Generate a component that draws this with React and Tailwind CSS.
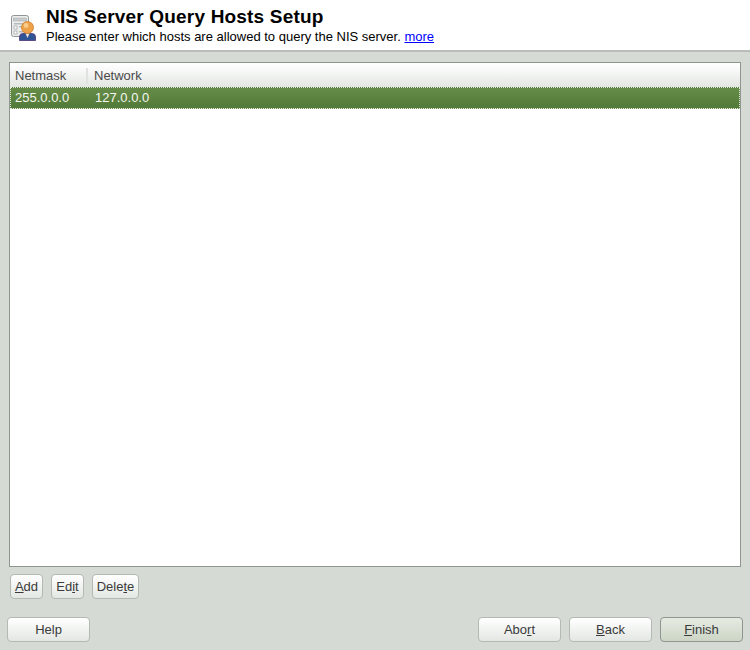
const NisIcon = () => (
  <svg width="26" height="28" viewBox="0 0 26 28" className="block">
    <rect x="1.5" y="1.5" width="17" height="21" rx="2" fill="#eceeec" stroke="#8f9499" />
    <rect x="3.5" y="4" width="13" height="3" fill="#c9ccce" stroke="#a2a6aa" strokeWidth="0.5" />
    <rect x="4" y="9" width="12" height="1.5" fill="#b5b9bc" />
    <rect x="4" y="12" width="3" height="3" fill="#fff" stroke="#8a8e92" strokeWidth="0.6" />
    <rect x="9" y="12" width="6" height="1.5" fill="#b5b9bc" />
    <rect x="4" y="17" width="3" height="3" fill="#fff" stroke="#8a8e92" strokeWidth="0.6" />
    <rect x="9" y="17" width="6" height="1.5" fill="#b5b9bc" />
    <path d="M9.5 26.5 L9.5 23 Q9.5 19.5 13 19.5 L22 19.5 Q25.5 19.5 25.5 23 L25.5 26.5 Z" fill="#2f5597" stroke="#55407e" strokeWidth="0.9" />
    <path d="M15.5 19.5 L19.5 19.5 L17.5 24 Z" fill="#e8e4d8" />
    <circle cx="17.5" cy="13.5" r="6" fill="#eda24a" stroke="#c97f2c" strokeWidth="0.8" />
    <circle cx="16" cy="11.5" r="2.4" fill="#f8cc8c" />
  </svg>
);

const Btn = ({ className, children }) => (
  <button
    className={`h-[25px] rounded-[4px] border border-[#b4b9b4] text-[13px] text-[#3a3a3a] flex items-center justify-center ${className}`}
  >
    <span>{children}</span>
  </button>
);

const plain = 'bg-gradient-to-b from-white to-[#e3e7e3]';

const App = () => {
  return (
    <div className="w-[750px] h-[650px] overflow-hidden flex flex-col bg-[#d5dad5] font-['Liberation_Sans',Arial,sans-serif]">
      {/* Header */}
      <div className="h-[52px] shrink-0 bg-white border-b-2 border-[#b9bdb9] flex items-start">
        <div className="w-[46px] shrink-0 pt-[14px] pl-[10px]">
          <NisIcon />
        </div>
        <div>
          <h1 className="text-[19px] leading-[20px] pt-[7px] font-bold text-black tracking-[0.18px]">
            NIS Server Query Hosts Setup
          </h1>
          <p className="text-[13px] leading-[14px] mt-[3px] text-black">
            Please enter which hosts are allowed to query the NIS server.{' '}
            <a href="#more" className="text-[#0000ff] underline">more</a>
          </p>
        </div>
      </div>

      {/* Table */}
      <div className="flex-1 flex flex-col pt-[10px] px-[9px]">
        <div className="h-[505px] bg-white border border-[#8f968f] pt-[1px] flex flex-col">
          <div className="h-[23px] shrink-0 flex items-center bg-gradient-to-b from-white to-[#e3e6e3] text-[13px] text-[#4a4a4a]">
            <div className="w-[78px] pl-[5px] h-[16px] leading-[16px] border-r-2 border-[#dfe2df]">Netmask</div>
            <div className="pl-[6px]">Network</div>
          </div>
          <div className="h-[22px] shrink-0 flex items-center bg-gradient-to-b from-[#668c48] to-[#527a38] border border-dotted border-[#e6ebe0] text-[13px] text-[#f4f7f0]">
            <div className="w-[79px] pl-[4px]">255.0.0.0</div>
            <div className="pl-[5px]">127.0.0.0</div>
          </div>
        </div>

        <div className="flex gap-[8px] mt-[7px] pl-[1px]">
          <Btn className={`w-[33px] ${plain}`}><u>A</u>dd</Btn>
          <Btn className={`w-[33px] ${plain}`}>Ed<u>i</u>t</Btn>
          <Btn className={`w-[47px] ${plain}`}>Dele<u>t</u>e</Btn>
        </div>
      </div>

      {/* Bottom buttons */}
      <div className="flex h-[33px] shrink-0 pl-[7px] pr-[7px]">
        <Btn className={`w-[83px] ${plain}`}>Help</Btn>
        <div className="ml-auto flex gap-[8px]">
          <Btn className={`w-[83px] ${plain}`}>Abo<u>r</u>t</Btn>
          <Btn className={`w-[83px] ${plain}`}><u>B</u>ack</Btn>
          <Btn className="w-[83px] bg-gradient-to-b from-[#e6ebe2] to-[#ccd5c6] !border-[#8f968f]"><u>F</u>inish</Btn>
        </div>
      </div>
    </div>
  );
};

export default App;
